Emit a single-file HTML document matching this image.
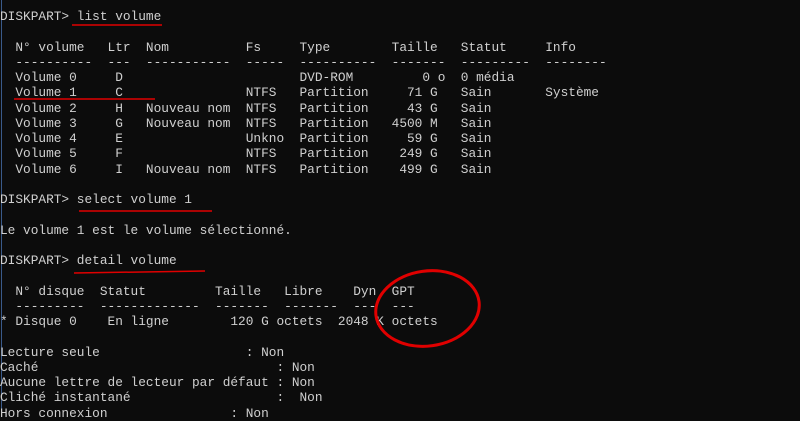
<!DOCTYPE html>
<html><head><meta charset="utf-8"><style>
html,body{margin:0;padding:0;background:#0c0c0c;width:800px;height:414px;overflow:hidden;}
pre{position:absolute;left:0;top:9px;margin:0;font-family:"Liberation Mono",monospace;font-size:12.8px;line-height:15.25px;color:#d0d0d0;}
.b{position:absolute;left:1px;top:0;width:1px;height:414px;background:#3a5a8a;}
svg{position:absolute;left:0;top:0;}
</style></head><body>
<div class="b"></div>
<pre>DISKPART&gt; list volume

  N° volume   Ltr  Nom          Fs     Type        Taille   Statut     Info
  ----------  ---  -----------  -----  ----------  -------  ---------  --------
  Volume 0     D                       DVD-ROM         0 o  0 média
  Volume 1     C                NTFS   Partition     71 G   Sain       Système
  Volume 2     H   Nouveau nom  NTFS   Partition     43 G   Sain
  Volume 3     G   Nouveau nom  NTFS   Partition   4500 M   Sain
  Volume 4     E                Unkno  Partition     59 G   Sain
  Volume 5     F                NTFS   Partition    249 G   Sain
  Volume 6     I   Nouveau nom  NTFS   Partition    499 G   Sain

DISKPART&gt; select volume 1

Le volume 1 est le volume sélectionné.

DISKPART&gt; detail volume

  N° disque  Statut         Taille   Libre    Dyn  GPT
  ---------  -------------  -------  -------  ---  ---
* Disque 0    En ligne        120 G octets  2048 K octets

Lecture seule                   : Non
Caché                               : Non
Aucune lettre de lecteur par défaut : Non
Cliché instantané                   :  Non
Hors connexion                : Non</pre>
<svg width="800" height="414">
<g stroke="#e00000" fill="none">
<line x1="72" y1="25" x2="162" y2="25" stroke-width="1.5"/>
<line x1="14" y1="99" x2="155" y2="99" stroke-width="1.5"/>
<line x1="79" y1="211" x2="212" y2="211" stroke-width="1.5"/>
<line x1="74" y1="273" x2="205" y2="271" stroke-width="1.5"/>
<ellipse cx="427.5" cy="308.5" rx="52" ry="37.5" stroke-width="3" transform="rotate(-8 427.5 308.5)"/>
</g></svg>
</body></html>
